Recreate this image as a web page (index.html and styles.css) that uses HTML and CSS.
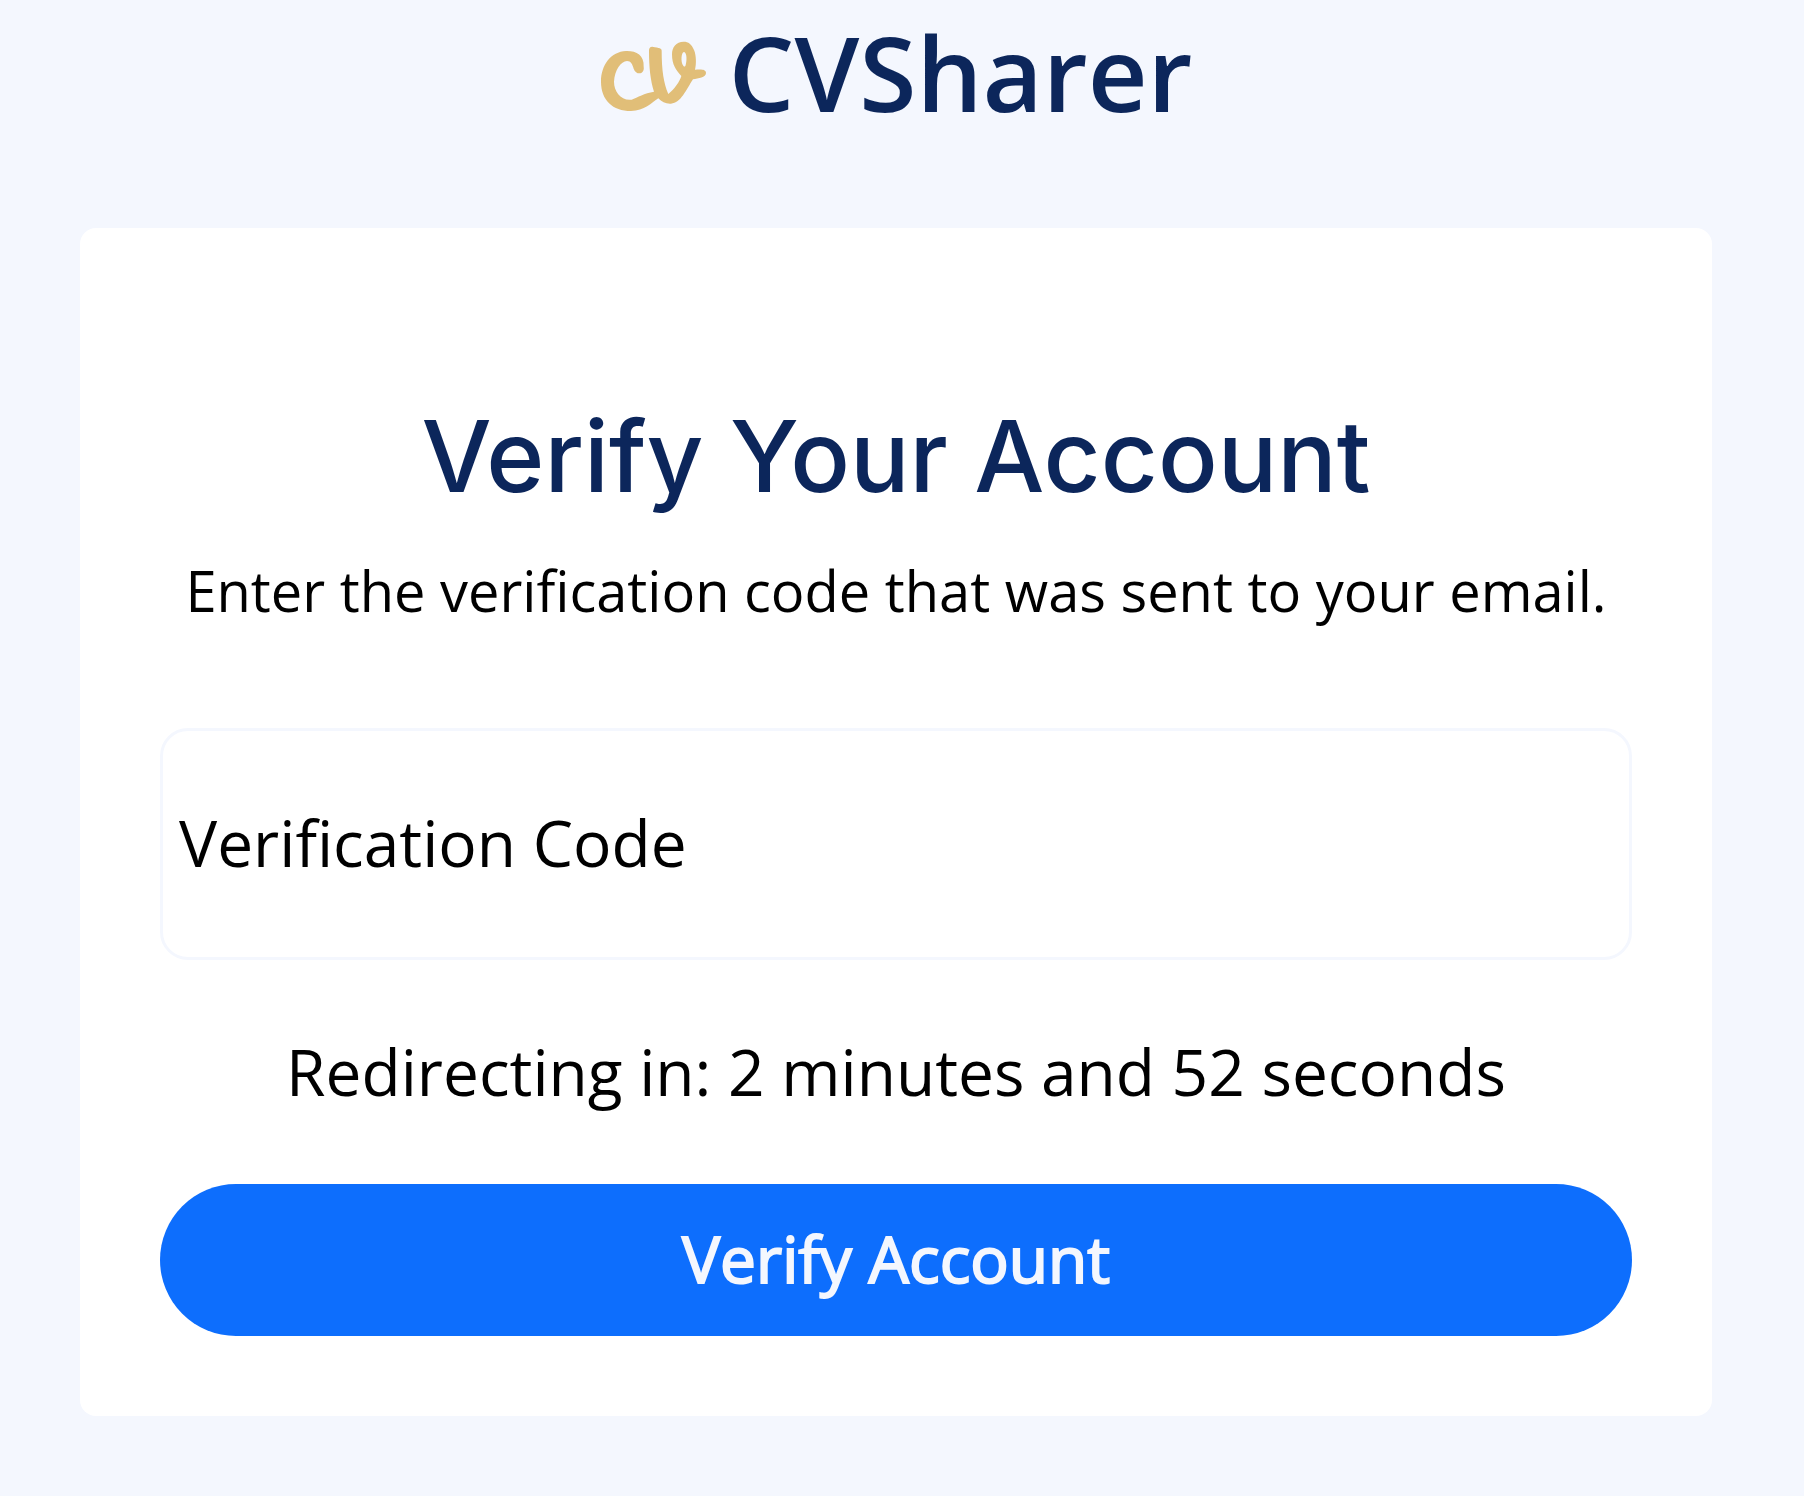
FILE: index.html
```html
<!DOCTYPE html>
<html lang="en">
<head>
<meta charset="utf-8">
<meta name="viewport" content="width=device-width, initial-scale=1">
<title>CVSharer</title>
<link rel="stylesheet" href="styles.css">
</head>
<body>
<header class="brand">
  <svg class="brand-mark" viewBox="57 60 321 216" aria-hidden="true">
    <path fill-rule="evenodd" d="M188 140C190 105 165 92 135 93C90 95 60 135 60 185C60 240 95 273 150 273C190 273 212 248 232 235C242 246 255 252 270 251C300 249 315 210 336 178C352 175 375 172 375 159C375 147 360 148 342 149C347 130 345 105 340 92C332 72 322 65 308 65C285 65 273 82 273 103C273 135 285 150 301 168C296 185 280 208 262 222C248 190 242 150 242 92C242 84 236 84 214 80C206 80 204 85 204 92C204 140 208 180 219 215C190 219 170 232 152 239C120 243 99 215 99 185C101 150 120 124 138 123C150 123 154 133 158 146C162 156 168 160 175 160C184 160 190 152 188 140ZM309 96C300 98 300 125 305 134C309 141 312 142 314 135C318 122 318 98 309 96Z"/>
  </svg>
  <span class="brand-name">CVSharer</span>
</header>
<main class="card">
  <h1 class="title">Verify Your Account</h1>
  <p class="lead">Enter the verification code that was sent to your email.</p>
  <form class="form">
    <input class="code" type="text" name="code" placeholder="Verification Code" aria-label="Verification Code">
    <p class="timer">Redirecting in: 2 minutes and 52 seconds</p>
    <button class="submit" type="submit">Verify Account</button>
  </form>
</main>
</body>
</html>
```
FILE: styles.css
```css
* {
  box-sizing: border-box;
}

body {
  margin: 0;
  padding: 16px 92px 80px 80px;
  background: #f4f7fe;
  color: #000;
  font-family: "Open Sans", "Noto Sans", sans-serif;
}

.brand {
  display: flex;
  align-items: center;
  justify-content: center;
  gap: 22px;
  height: 120px;
  margin-bottom: 92px;
}

.brand-mark {
  width: 107px;
  height: 72px;
  fill: #e1be78;
}

.brand-name {
  padding-bottom: 8px;
  color: #0c265b;
  font-size: 104px;
  font-weight: 600;
  line-height: 120px;
}

.card {
  padding: 168px 80px 80px;
  border-radius: 16px;
  background: #fff;
  text-align: center;
}

.title {
  margin: 0 0 32px;
  color: #0c265b;
  font-family: Inter, sans-serif;
  font-size: 99px;
  font-weight: 500;
  line-height: 120px;
}

.lead {
  margin: 0 0 96px;
  font-size: 56px;
  line-height: 84px;
}

.form {
  display: flex;
  flex-direction: column;
}

.code {
  width: 100%;
  height: 232px;
  padding: 0 16px 4px;
  border: 3px solid #f4f7fe;
  border-radius: 28px;
  background: #fff;
  color: #000;
  font: inherit;
  font-size: 64px;
}

.code::placeholder {
  color: #000;
  opacity: 1;
}

.timer {
  margin: 64px 0;
  font-size: 64px;
  line-height: 96px;
}

.submit {
  height: 152px;
  padding: 0 16px 4px;
  border: 0;
  border-radius: 76px;
  background: #0d6efd;
  color: #f4f7fe;
  font: inherit;
  font-size: 64px;
  -webkit-text-stroke: 2px #f4f7fe;
}
```
